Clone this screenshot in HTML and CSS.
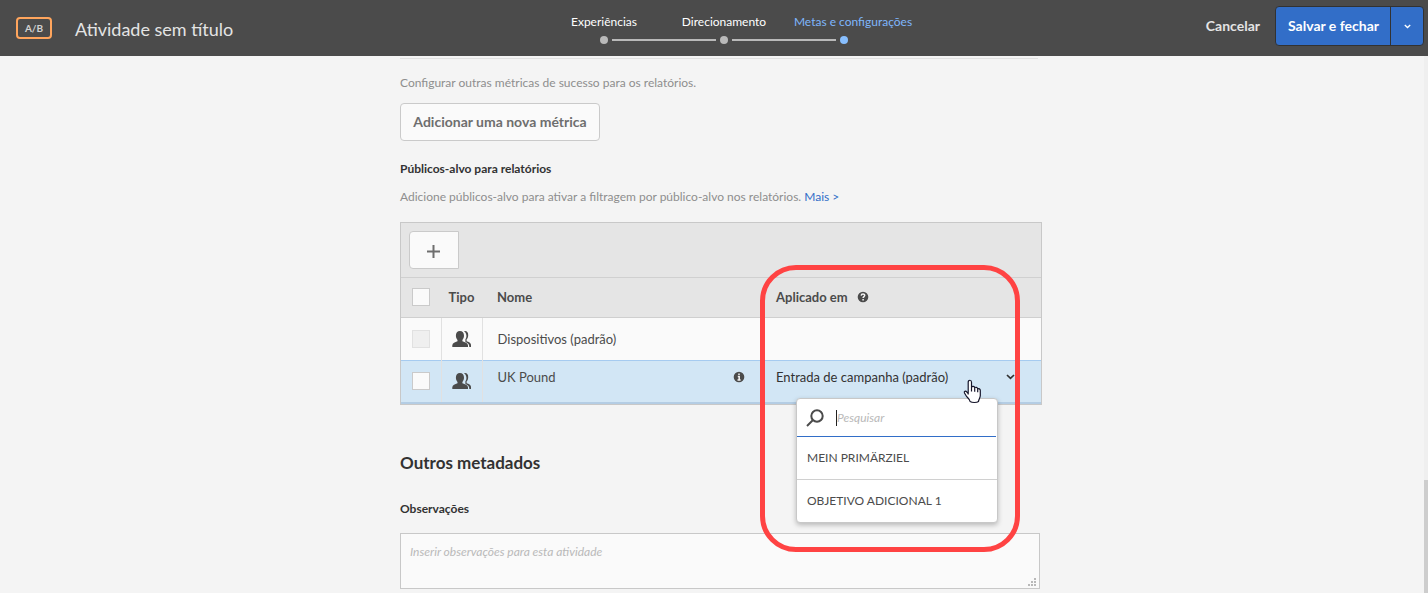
FILE: index.html
```html
<!DOCTYPE html>
<html lang="pt-BR">
<head>
<meta charset="utf-8">
<meta name="viewport" content="width=device-width, initial-scale=1">
<title>Atividade sem título</title>
<link rel="stylesheet" href="styles.css">
</head>
<body>
<svg class="sprite" aria-hidden="true">
  <symbol id="people" viewBox="0 0 20 18">
    <path d="M12 1.200C14.800 .6 16.400 2.600 16.200 5.400C16.100 7.200 15.400 8.600 14.600 9.600V11.200C16.800 12 18.800 12.800 19 14.800V17H17.300C17.300 14.300 16.500 13.200 13.400 11.900V9.300C15 7.300 14.900 3.200 12 1.200Z"/>
    <path d="M7.900 1C10.600 1 12 3 12 5.600C12 7.600 11.300 9.100 10.400 10V11.300C13 12.200 15.800 13.200 16 15.200V17H.3V15.200C.5 13.200 3 12.200 5.500 11.300V10C4.500 9.100 3.900 7.600 3.900 5.600C3.900 3 5.300 1 7.900 1Z"/>
  </symbol>
  <symbol id="chevron" viewBox="0 0 9 6">
    <path d="M1 1L4.500 4.300L8 1" fill="none" stroke="currentColor" stroke-width="1.700"/>
  </symbol>
</svg>

<header class="topbar">
  <div class="topbar-title">
    <span class="badge">A/B</span>
    <h1 class="title">Atividade sem título</h1>
  </div>
  <ol class="steps">
    <li class="step"><span class="step-label">Experiências</span><span class="rail first"><i class="line"></i><i class="dot"></i><i class="line"></i></span></li>
    <li class="step"><span class="step-label">Direcionamento</span><span class="rail"><i class="line"></i><i class="dot"></i><i class="line"></i></span></li>
    <li class="step current" aria-current="step"><span class="step-label shifted">Metas e configurações</span><span class="rail last"><i class="line"></i><i class="dot"></i><i class="line"></i></span></li>
  </ol>
  <div class="actions">
    <button class="cancel" type="button">Cancelar</button>
    <div class="split">
      <button class="save" type="button">Salvar e fechar</button>
      <button class="save-more" type="button" aria-label="Mais opções"><svg class="chevron small"><use href="#chevron"/></svg></button>
    </div>
  </div>
</header>

<div class="viewport">
  <main class="content">
    <hr class="rule">
    <p class="text">Configurar outras métricas de sucesso para os relatórios.</p>
    <button class="add-metric" type="button">Adicionar uma nova métrica</button>
    <h2 class="subhead">Públicos-alvo para relatórios</h2>
    <p class="text">Adicione públicos-alvo para ativar a filtragem por público-alvo nos relatórios. <a class="link" href="#">Mais &gt;</a></p>

    <section class="audiences">
      <div class="toolbar">
        <button class="add" type="button" aria-label="Adicionar público-alvo"><svg class="plus" viewBox="0 0 13 13"><path d="M6.500 0V13M0 6.500H13"/></svg></button>
      </div>
      <table class="grid">
        <thead>
          <tr>
            <th class="col-check"><input class="check" type="checkbox" aria-label="Selecionar tudo"></th>
            <th class="col-type">Tipo</th>
            <th class="col-name">Nome</th>
            <th class="col-applied">Aplicado em
              <svg class="info help" viewBox="0 0 12 12" role="img" aria-label="Ajuda"><circle cx="6" cy="6" r="5.300"/><path class="mark" d="M4.200 4.600C4.300 2.500 7.800 2.600 7.700 4.500C7.600 5.700 6.100 5.700 6.100 7.100M6.100 8V9.400"/></svg>
            </th>
          </tr>
        </thead>
        <tbody>
          <tr>
            <td class="cell-check"><input class="check" type="checkbox" aria-label="Dispositivos (padrão)" disabled></td>
            <td class="cell-type"><svg class="people"><use href="#people"/></svg></td>
            <td class="cell-name">Dispositivos (padrão)</td>
            <td></td>
          </tr>
          <tr class="selected">
            <td class="cell-check"><input class="check" type="checkbox" aria-label="UK Pound"></td>
            <td class="cell-type"><svg class="people"><use href="#people"/></svg></td>
            <td class="cell-name"><div class="name-row">UK Pound
              <svg class="info" viewBox="0 0 12 12" role="img" aria-label="Informações"><circle cx="6" cy="6" r="5.300"/><path class="mark" d="M6 2.400V4M4.800 5.400H6.200V8.700M4.500 9H7.600"/></svg></div>
            </td>
            <td class="cell-applied">
              <button class="applied" type="button" aria-haspopup="listbox" aria-expanded="true">Entrada de campanha (padrão)<svg class="chevron"><use href="#chevron"/></svg></button>
            </td>
          </tr>
        </tbody>
      </table>
      <div class="menu">
        <label class="search">
          <svg class="lens" viewBox="0 0 18 18"><circle cx="11" cy="7" r="5.700"/><path d="M7 11L1 17"/></svg>
          <span class="caret"></span>
          <input class="search-input" type="text" placeholder="Pesquisar" aria-label="Pesquisar">
        </label>
        <button class="option" type="button">MEIN PRIMÄRZIEL</button>
        <button class="option" type="button">OBJETIVO ADICIONAL 1</button>
      </div>
      <div class="highlight"></div>
      <svg class="pointer" viewBox="0 0 19 26" aria-hidden="true"><path d="M5.200 15.500V3.200C5.200.6 8.500.6 8.500 3.200V8.200C9.200 6.900 11.500 7.200 11.700 8.700C12.600 7.900 14.400 8.200 14.700 9.800C15.900 9.200 17.300 10 17.300 11.600V16.500C17.300 19 15.700 20.200 15.500 22.500C13.800 23.800 9 23.800 7.100 22.500C6.600 19.900 4.400 18.800 3.100 16.700L1.500 14C.7 12.500 2.600 11.500 3.700 12.800L5.200 14.600M8.500 8V12.600M11.700 8.700V12.800M14.700 9.800V13.200"/></svg>
    </section>

    <h2 class="section-title">Outros metadados</h2>
    <label class="subhead" for="notes">Observações</label>
    <div class="notes-box">
      <textarea class="notes" id="notes" placeholder="Inserir observações para esta atividade"></textarea>
      <svg class="grip" viewBox="0 0 8 8" aria-hidden="true"><path d="M6 0h2v2h-2zM3 3h2v2h-2zM6 3h2v2h-2zM0 6h2v2h-2zM3 6h2v2h-2zM6 6h2v2h-2z"/></svg>
    </div>
  </main>
  <div class="scrollbar"><div class="thumb"></div></div>
</div>
</body>
</html>
```
FILE: styles.css
```css
* { box-sizing: border-box; }

body {
  margin: 0;
  height: 100vh;
  display: flex;
  flex-direction: column;
  overflow: hidden;
  background: #f4f4f4;
  color: #4b4b4b;
  font: 12px/20px Lato, "Open Sans", sans-serif;
}

h1, h2, p, ol, hr { margin: 0; padding: 0; }
button, input, textarea { font: inherit; color: inherit; margin: 0; }
button { padding: 0; border: 0; background: none; cursor: pointer; }
svg { display: block; fill: currentColor; }
.sprite { display: none; }

/* Top bar */
.topbar {
  display: grid;
  grid-template-columns: 1fr auto 1fr;
  align-items: center;
  flex: none;
  height: 56px;
  padding: 0 4px 0 16px;
  background: #4b4b4b;
}
.topbar-title { display: flex; align-items: center; gap: 23px; }
.badge {
  width: 36px;
  height: 22px;
  border: 2px solid #ffa55d;
  border-radius: 4px;
  color: #d2d2d2;
  font-size: 10px;
  font-weight: 700;
  line-height: 18px;
  text-align: center;
}
.title { color: #e4e4e4; font-size: 18px; font-weight: 400; line-height: 24px; padding-top: 2px; }
.steps {
  display: grid;
  grid-template-columns: repeat(3, 120px);
  margin-left: 8px;
  list-style: none;
}
.step { display: flex; flex-direction: column; align-items: center; gap: 4px; color: #fff; }
.step-label { white-space: nowrap; }
.step-label.shifted { padding-left: 18px; }
.rail {
  display: grid;
  grid-template-columns: 1fr 8px 1fr;
  gap: 4px;
  align-items: center;
  width: 100%;
}
.line { height: 2px; background: #b9b9b9; }
.dot { height: 8px; border-radius: 50%; background: #b9b9b9; }
.first .line:first-child, .last .line:last-child { visibility: hidden; }
.current { color: #7fb6fb; }
.current .dot { background: #88bfff; }
.actions { display: flex; align-items: center; justify-content: flex-end; gap: 15px; margin-bottom: 4px; }
.cancel { color: #e4e4e4; font-size: 14px; font-weight: 700; }
.split {
  display: flex;
  height: 40px;
  border: 1px solid #323232;
  border-radius: 4px;
  background: #326ec8;
  color: #fff;
}
.save { padding: 0 11px 0 12px; font-size: 14px; font-weight: 700; }
.save-more { display: grid; place-items: center; width: 33px; border-left: 1px solid #323232; }
.chevron { width: 9px; height: 6px; }
.chevron.small { width: 7px; height: 5px; }

/* Page area */
.viewport { display: flex; flex: 1; min-height: 0; }
.content {
  width: 100%;
  max-width: 660px;
  margin: 0 auto;
  padding: 2px 0 4px 18px;
}
.rule { height: 1px; border: 0; margin-right: 4px; background: #e1e1e1; }
.text { color: #8e8e8e; }
.rule + .text { margin-top: 14px; }
.link { color: #326ec8; text-decoration: none; }
.add-metric {
  height: 38px;
  min-width: 200px;
  margin-top: 10px;
  padding: 0 10px;
  border: 1px solid #cacaca;
  border-radius: 4px;
  background: #fafafa;
  color: #6e6e6e;
  font-size: 14px;
  font-weight: 700;
}
.subhead { display: block; color: #323232; font-weight: 700; }
.add-metric + .subhead { margin: 18px 0 8px; font-size: 12px; }

/* Audience table */
.audiences {
  position: relative;
  z-index: 1;
  margin-top: 15px;
  border: 1px solid #c8c8c8;
  background: #e5e5e5;
}
.toolbar { padding: 8px; border-bottom: 1px solid #d0d0d0; }
.add {
  display: grid;
  place-items: center;
  width: 50px;
  height: 38px;
  padding: 2px 2px 0 0;
  border: 1px solid #cacaca;
  border-radius: 4px 0 0 4px;
  background: #fafafa;
  color: #6e6e6e;
}
.plus { width: 13px; height: 13px; fill: none; stroke: currentColor; stroke-width: 2; }
.grid { width: 100%; border-collapse: collapse; table-layout: fixed; font-size: 13px; }
.grid th, .grid td { padding: 0; text-align: left; }
.grid th { height: 39px; font-weight: 700; border-bottom: 1px solid #cfcfcf; }
.col-check { width: 40px; }
.col-type { width: 41px; }
.col-name { width: 280px; }
.grid .col-type { text-align: center; }
.grid .col-name, .grid .cell-name { padding: 0 17px 0 15px; }
.grid .col-applied, .grid .cell-applied { padding: 0 26px 0 14px; }
.grid tbody td { height: 43px; background: #fafafa; }
.grid .selected td { background: #d2e6f5; border-top: 1px solid #a6cbf0; }
.grid .selected .cell-name, .grid .selected .cell-applied { padding-bottom: 8px; }
.grid .cell-check, .grid .cell-type { border-right: 1px solid #e1e1e1; }
.selected { border-bottom: 2px solid #b4cde4; }
.check {
  appearance: none;
  display: block;
  width: 18px;
  height: 18px;
  margin-left: 11px;
  border: 1px solid #cacaca;
  background: #fafafa;
}
.check:disabled { border-color: #e1e1e1; background: #efefef; }
.people { width: 20px; height: 18px; margin: 0 auto; }
.name-row { display: flex; align-items: center; justify-content: space-between; }
.info { width: 12px; height: 12px; }
.help { display: inline-block; margin-left: 6px; vertical-align: -1px; }
.mark { fill: none; stroke: #f4f4f4; stroke-width: 1.500; }
.applied {
  display: flex;
  align-items: center;
  justify-content: space-between;
  width: 100%;
  color: #323232;
  text-align: left;
  white-space: nowrap;
}

/* Search menu that opens over the table */
.menu {
  position: absolute;
  top: 175px;
  right: 43px;
  width: 202px;
  border: 1px solid #c8c8c8;
  border-radius: 4px;
  background: #fff;
  box-shadow: 0 2px 5px rgba(0, 0, 0, .25);
}
.search {
  display: flex;
  align-items: center;
  height: 38px;
  margin-right: 1px;
  padding-left: 9px;
  border-bottom: 1px solid #326ec8;
}
.lens { flex: none; width: 18px; height: 18px; fill: none; stroke: #4b4b4b; stroke-width: 2; }
.caret { flex: none; width: 1px; height: 16px; margin-left: 12px; background: #222; }
.search-input { width: 100%; min-width: 0; padding: 0; border: 0; outline: 0; background: none; }
::placeholder { color: #b9b9b9; font-style: italic; opacity: 1; }
.option { display: block; width: 100%; height: 42px; padding: 0 10px; text-align: left; }
.option + .option { height: 43px; border-top: 1px solid #d0d0d0; }

.highlight {
  position: absolute;
  top: 42px;
  right: 21px;
  width: 260px;
  height: 287px;
  border: 5px solid #ff4343;
  border-radius: 36px;
  pointer-events: none;
}
.pointer {
  position: absolute;
  top: 156px;
  right: 59px;
  width: 19px;
  height: 26px;
  fill: #fff;
  stroke: #15152a;
  stroke-width: 1.200;
  stroke-linejoin: round;
}

/* Metadata */
.section-title { margin: 46px 0 24px; color: #323232; font-size: 17px; font-weight: 700; line-height: 24px; }
.notes-box { position: relative; margin: 14px 2px 0 0; }
.notes {
  display: block;
  width: 100%;
  height: 56px;
  padding: 8px 9px;
  border: 1px solid #c8c8c8;
  background: #fafafa;
  outline: 0;
  resize: none;
}
.grip { position: absolute; right: 4px; bottom: 3px; width: 8px; height: 8px; fill: #b9b9b9; }

.scrollbar { display: flex; flex-direction: column; justify-content: flex-end; flex: none; width: 4px; background: #efefef; }
.thumb { height: 21%; background: #cdcdcd; }
```
